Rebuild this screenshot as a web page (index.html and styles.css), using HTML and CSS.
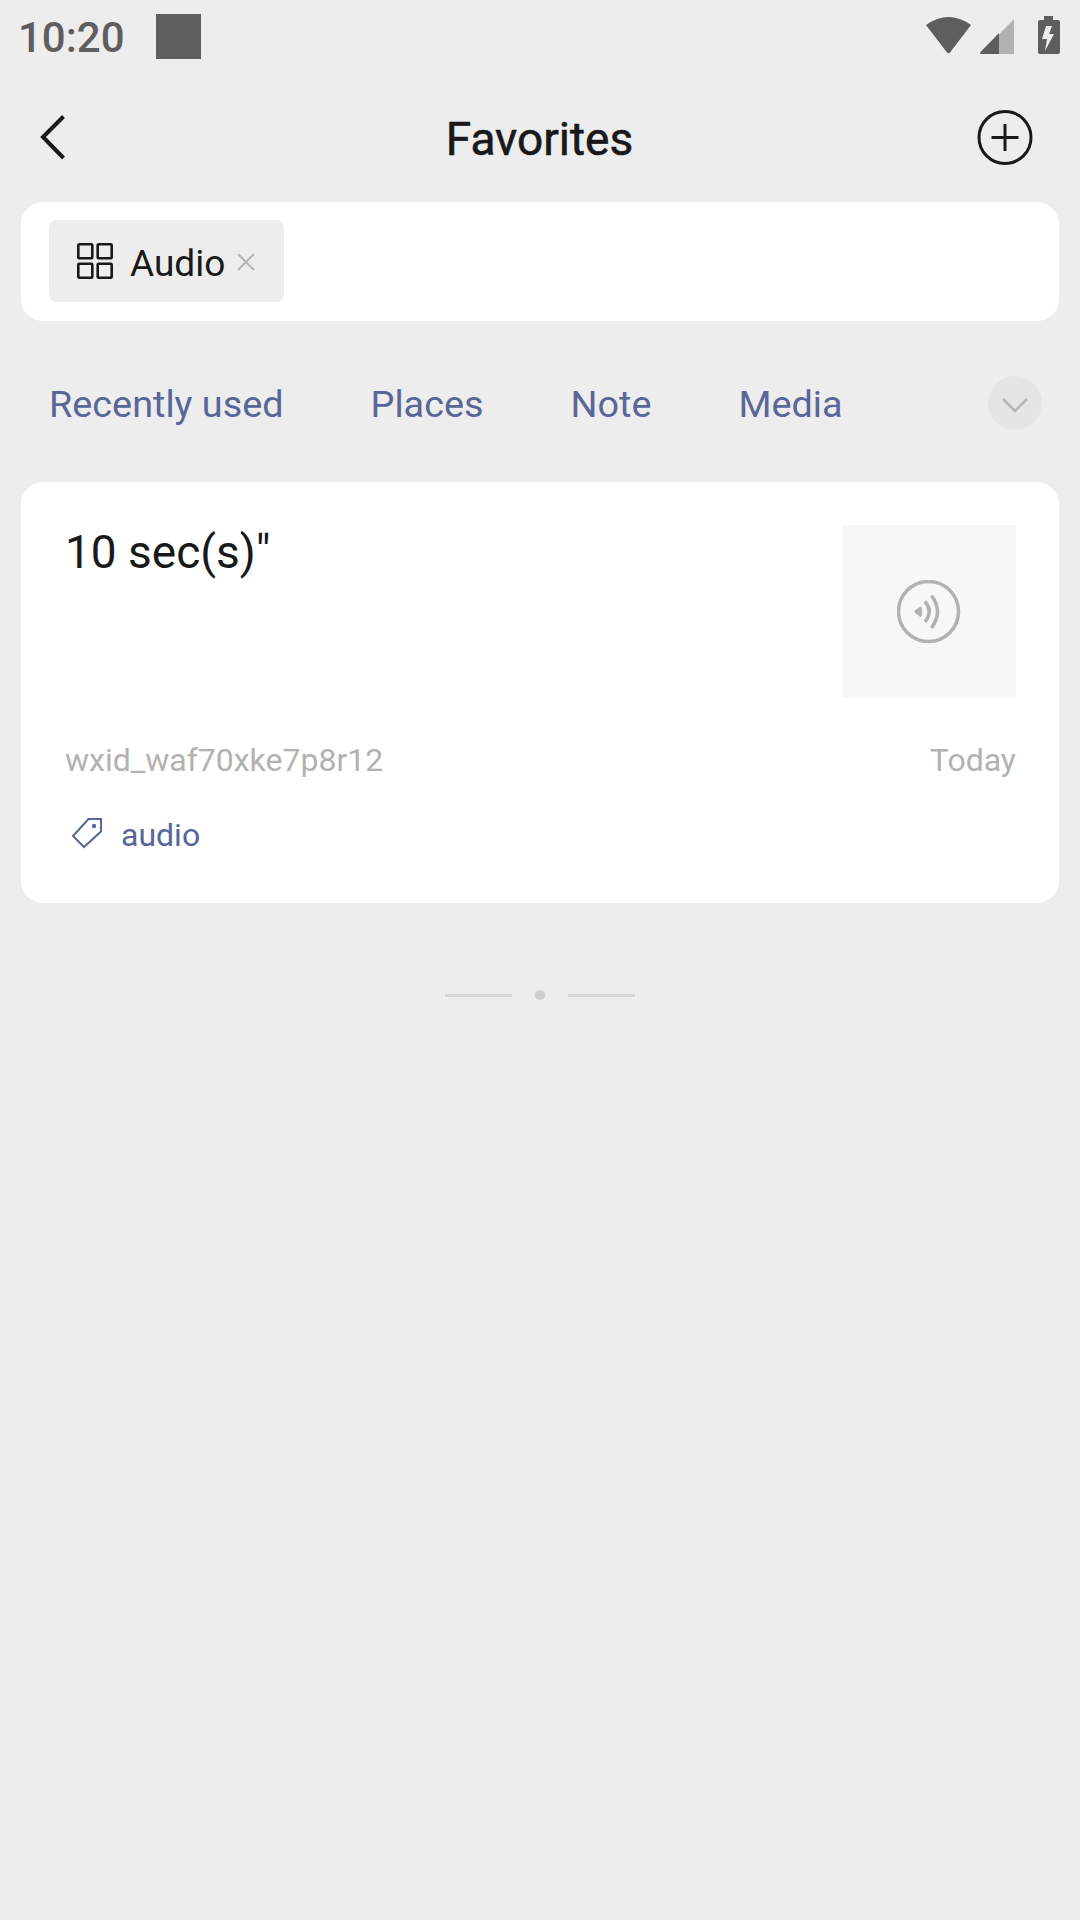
FILE: index.html
```html
<!DOCTYPE html>
<html lang="en">
<head>
<meta charset="utf-8">
<title>Favorites</title>
<link rel="stylesheet" href="styles.css">
</head>
<body>
<div class="status-bar">
  <span class="clock">10:20</span>
  <span class="notification"></span>
  <svg class="status-icons" width="134" height="38" viewBox="0 0 134 38">
    <path class="solid" d="M0 9Q22.500-7 45 9L24 36.500Q22.500 38 21 36.500Z"/>
    <path class="faint" d="M88 3V38H54Z"/>
    <path class="solid" d="M73 17V38H55Q53 38 55 35.500Z"/>
    <path class="solid" fill-rule="evenodd" d="M118 0h9v4h5q2 0 2 2v30q0 2-2 2h-18q-2 0-2-2V6q0-2 2-2h4zM120 10l-4 13h5l-2 12 9-17h-5l3-8z"/>
  </svg>
</div>
<header class="header">
  <svg class="back" width="26" height="46" viewBox="0 0 26 46"><path d="M23.500 2.500L3 23L23.500 44"/></svg>
  <h1 class="title">Favorites</h1>
  <svg class="add" width="56" height="56" viewBox="0 0 56 56"><circle cx="28" cy="28.500" r="26"/><path d="M28 15V42M14.500 28.500H41.500"/></svg>
</header>
<main>
  <section class="search">
    <div class="chip">
      <svg class="grid" width="36" height="36" viewBox="0 0 36 36"><rect x="1.300" y="1.300" width="14" height="14" rx="1"/><rect x="20.700" y="1.300" width="14" height="14" rx="1"/><rect x="1.300" y="20.700" width="14" height="14" rx="1"/><rect x="20.700" y="20.700" width="14" height="14" rx="1"/></svg>
      <span class="chip-label">Audio</span>
      <svg class="remove" width="18" height="18" viewBox="0 0 18 18"><path d="M1 1L17 17M17 1L1 17"/></svg>
    </div>
  </section>
  <nav class="tabs">
    <span>Recently used</span><span>Places</span><span>Note</span><span>Media</span>
    <svg class="expand" width="54" height="54" viewBox="0 0 54 54"><circle cx="27" cy="27" r="27"/><path d="M15 23L27 35L39 23"/></svg>
  </nav>
  <article class="card">
    <div class="card-top">
      <h2 class="duration">10 sec(s)"</h2>
      <div class="thumb">
        <svg width="64" height="64" viewBox="0 0 64 64"><circle cx="31.500" cy="31.500" r="30"/><path d="M28 21.500Q36.500 31.500 28 42M34.500 15.500Q46.500 31.500 34.500 48"/><path class="wedge" d="M18.500 31.500L23.500 28Q24.500 31.500 23.500 35.500Z"/></svg>
      </div>
    </div>
    <div class="meta"><span>wxid_waf70xke7p8r12</span><span>Today</span></div>
    <div class="tag">
      <svg width="32" height="32" viewBox="0 0 32 32"><path d="M17.500 2H30V14.500L13 30L2 19Z"/><circle cx="23" cy="9" r="2.200"/></svg>
      <span>audio</span>
    </div>
  </article>
  <div class="end"><i class="line"></i><i class="dot"></i><i class="line"></i></div>
</main>
</body>
</html>
```

FILE: styles.css
```css
* { box-sizing: border-box; margin: 0; padding: 0; }
body {
  width: 1080px;
  height: 1920px;
  overflow: hidden;
  background: #ededed;
  color: #191919;
  font-family: Roboto, "Liberation Sans", sans-serif;
}
svg { display: block; fill: none; flex: none; }

.status-bar { height: 72px; display: flex; align-items: flex-start; padding: 0 20px 0 18px; color: #5e5e5e; }
.clock { width: 138px; font-size: 42px; font-weight: 500; line-height: 75px; white-space: nowrap; }
.notification { width: 45px; height: 45px; margin-top: 14px; background: #5e5e5e; }
.status-icons { margin: 16px 0 0 auto; }
.solid { fill: #5e5e5e; }
.faint { fill: #b2b2b2; }

.header { height: 130px; display: flex; align-items: center; justify-content: space-between; padding: 0 47px 0 40px; }
.back { margin-right: 43px; }
.back path { stroke: #191919; stroke-width: 4; }
.title { font-size: 46px; font-weight: 400; line-height: 60px; -webkit-text-stroke: 0.6px #191919; padding: 4px 7px 0 0; }
.add { stroke: #191919; stroke-width: 3; }

main { padding: 0 21px; }
.search { height: 119px; margin-bottom: 1px; padding: 18px 28px; border-radius: 22px; background: #fff; }
.chip { width: 235px; height: 82px; border-radius: 8px; background: #ededed; display: flex; align-items: center; padding-left: 28px; }
.chip-label { width: 107px; margin-left: 17px; font-size: 37px; line-height: 48px; padding-top: 5px; }
.grid { stroke: #191919; stroke-width: 2.6; }
.remove { margin-top: 2px; stroke: #b5b5b5; stroke-width: 2; }

.tabs { height: 160px; display: flex; align-items: center; gap: 87px; padding: 4px 17px 0 28px; font-size: 37.8px; color: #596697; line-height: 50px; white-space: nowrap; }
.expand { margin: -2px 0 0 auto; }
.expand circle { fill: #e5e5e5; }
.expand path { stroke: #b5b5b5; stroke-width: 2.5; }

.card { height: 421px; padding: 43px 43px 0 44px; border-radius: 22px; background: #fff; }
.card-top { display: flex; justify-content: space-between; height: 173px; }
.duration { font-size: 46px; font-weight: 400; line-height: 54px; }
.thumb { width: 174px; height: 173px; display: flex; align-items: center; justify-content: center; background: #f7f7f7; }
.thumb svg { stroke: #b2b2b2; stroke-width: 3.5; }
.thumb .wedge { fill: #b2b2b2; stroke-width: 2.5; stroke-linejoin: round; }
.meta { display: flex; justify-content: space-between; margin-top: 42px; font-size: 32px; line-height: 40px; color: #b2b2b2; }
.tag { display: flex; align-items: center; margin-top: 35px; padding-left: 6px; gap: 18px; font-size: 32px; line-height: 40px; color: #596697; }
.tag svg { margin-top: -4px; }
.tag path { stroke: #596697; stroke-width: 2; }
.tag circle { fill: #596697; }

.end { display: flex; align-items: center; justify-content: center; gap: 23px; height: 12px; margin-top: 86px; }
.line { width: 67px; height: 3px; background: #d6d6d6; }
.dot { width: 10px; height: 10px; border-radius: 50%; background: #cecece; }
```
